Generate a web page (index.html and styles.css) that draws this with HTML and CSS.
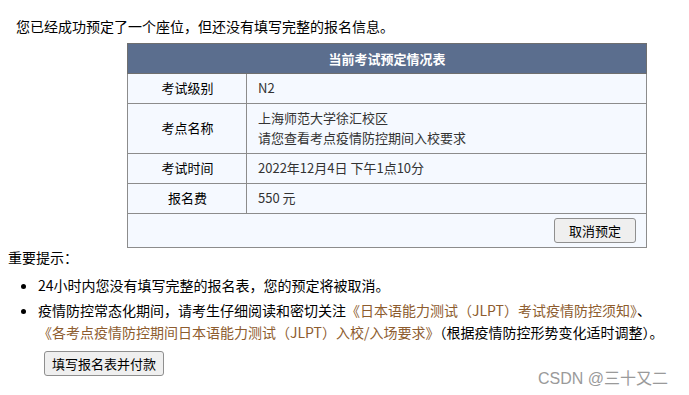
FILE: index.html
```html
<!DOCTYPE html>
<html lang="zh-CN">
<head>
    <meta charset="UTF-8">
    <title>考试预定</title>
    <link rel="stylesheet" href="styles.css">
</head>
<body>
    <p class="uzenet">您已经成功预定了一个座位，但还没有填写完整的报名信息。</p>
    <table class="foglalas">
        <tr>
            <th colspan="2">当前考试预定情况表</th>
        </tr>
        <tr>
            <td class="cimke">考试级别</td>
            <td>N2</td>
        </tr>
        <tr>
            <td class="cimke">考点名称</td>
            <td>上海师范大学徐汇校区<br>请您查看考点疫情防控期间入校要求</td>
        </tr>
        <tr>
            <td class="cimke">考试时间</td>
            <td>2022年12月4日 下午1点10分</td>
        </tr>
        <tr>
            <td class="cimke">报名费</td>
            <td>550 元</td>
        </tr>
        <tr>
            <td colspan="2" class="gomb-sor"><button class="gomb">取消预定</button></td>
        </tr>
    </table>
    <div class="tipp-cim">重要提示：</div>
    <ul class="tippek">
        <li>24小时内您没有填写完整的报名表，您的预定将被取消。</li>
        <li>疫情防控常态化期间，请考生仔细阅读和密切关注<a href="#">《日本语能力测试（JLPT）考试疫情防控须知》</a>、<br><a href="#">《各考点疫情防控期间日本语能力测试（JLPT）入校/入场要求》</a>（根据疫情防控形势变化适时调整）。</li>
    </ul>
    <div class="also">
        <button class="gomb">填写报名表并付款</button>
    </div>
    <div class="vizjel">CSDN @三十又二</div>
</body>
</html>
```

FILE: styles.css
```css
body {
    font-family: "Noto Sans CJK SC", "Liberation Sans", sans-serif;
    font-size: 14px;
    color: #000;
    background: #fff;
    margin: 0;
    padding: 8px;
}
.uzenet {
    margin: 8px 0 0 8px;
    line-height: 20px;
}
.foglalas {
    width: 520px;
    margin: 7px 0 0 119px;
    border-collapse: collapse;
    border: 1px solid #6f6f6f;
    font-size: 13px;
}
.foglalas th {
    background-color: #5b6e8e;
    color: #fff;
    font-weight: bold;
    height: 29px;
    padding: 0;
    border: 1px solid #6f6f6f;
}
.foglalas td {
    background-color: #f5f9ff;
    border: 1px solid #8c8c8c;
    padding: 4px 10px 5px 11px;
    line-height: 20px;
    color: #333;
}
.foglalas td.cimke {
    width: 97px;
    text-align: center;
    color: #000;
}
.foglalas td.gomb-sor {
    text-align: right;
    padding: 4px 10px 4px;
}
.gomb {
    font-family: inherit;
    font-size: 13px;
    background: #efefef;
    border: 1px solid #8f8f8f;
    border-radius: 3px;
    padding: 0 14px;
    height: 25px;
    color: #000;
}
.tipp-cim {
    margin-top: 0;
    line-height: 18px;
}
.tippek {
    margin: 8px 0 0;
    padding-left: 30px;
}
.tippek li {
    line-height: 22px;
    margin-bottom: 3px;
}
.tippek a {
    color: #8d5c2e;
    text-decoration: none;
}
.also {
    margin: 8px 0 0 36px;
}
.also .gomb {
    width: 120px;
    padding: 0;
}
.vizjel {
    position: absolute;
    left: 538px;
    top: 365px;
    font-size: 16px;
    color: #9a9a9a;
    font-family: "Liberation Sans", "Noto Sans CJK SC", sans-serif;
}
```
